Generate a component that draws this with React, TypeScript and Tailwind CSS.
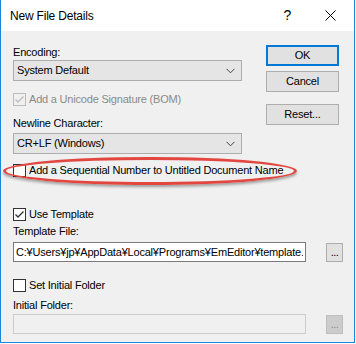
const font = { fontFamily: '"Liberation Sans", Arial, sans-serif' };

function Chevron() {
  return (
    <svg width="9" height="6" viewBox="0 0 9 6" className="shrink-0">
      <path d="M0.5 0.8 L4.5 4.8 L8.5 0.8" fill="none" stroke="#404040" strokeWidth="1" />
    </svg>
  );
}

function Select({ value }: { value: string }) {
  return (
    <div className="flex h-[21px] w-[229px] items-center justify-between border border-[#adadad] bg-[#e5e5e5] pl-[3px] pr-[6px]">
      <span className="leading-none">{value}</span>
      <Chevron />
    </div>
  );
}

function CheckBox({ checked, disabled }: { checked?: boolean; disabled?: boolean }) {
  return (
    <div
      className={`flex h-[13px] w-[13px] shrink-0 items-center justify-center border ${
        disabled ? "border-[#bcbcbc] bg-[#f0f0f0]" : "border-[#333333] bg-white"
      }`}
    >
      {checked && (
        <svg width="11" height="11" viewBox="0 0 11 11">
          <path
            d="M1.5 5.5 L4 8 L9.5 2.5"
            fill="none"
            stroke={disabled ? "#bcbcbc" : "#333333"}
            strokeWidth="1.3"
          />
        </svg>
      )}
    </div>
  );
}

function Check({
  label,
  checked,
  disabled,
  className,
}: {
  label: string;
  checked?: boolean;
  disabled?: boolean;
  className?: string;
}) {
  return (
    <div className={`flex h-[13px] items-center gap-[3px] ${className ?? ""}`}>
      <CheckBox checked={checked} disabled={disabled} />
      <span className={`whitespace-nowrap leading-none ${disabled ? "text-[#8a8a8a]" : "text-black"}`}>
        {label}
      </span>
    </div>
  );
}

function Button({ label, primary }: { label: string; primary?: boolean }) {
  return (
    <div
      className={`flex h-[21px] w-[73px] items-center justify-center bg-[#e1e1e1] ${
        primary ? "border-2 border-[#0078d7]" : "border border-[#adadad]"
      }`}
    >
      <span className="leading-none">{label}</span>
    </div>
  );
}

function DotsButton({ disabled }: { disabled?: boolean }) {
  return (
    <div
      className={`flex h-[19px] w-[17px] items-end justify-center border pb-[3px] ${
        disabled ? "border-[#bfbfbf] bg-[#cccccc] text-[#8a8a8a]" : "border-[#adadad] bg-[#e1e1e1] text-black"
      }`}
    >
      <span className="text-[11px] leading-none tracking-[-0.5px]">...</span>
    </div>
  );
}

export default function App() {
  return (
    <div className="h-[344px] w-[356px] bg-white text-[11px] tracking-[-0.2px] text-black" style={font}>
      <div className="relative flex h-[343px] w-[355px] flex-col border-x border-b border-[#1c87d9]">
        {/* title bar */}
        <div className="flex h-[31px] items-center bg-white pl-[9px]">
          <span className="text-[12px]">New File Details</span>
          <span className="ml-auto mr-[34px] text-[14px] font-light">?</span>
          <svg width="11" height="11" viewBox="0 0 11 11" className="mr-[18px]">
            <path d="M0.5 0.5 L10.5 10.5 M10.5 0.5 L0.5 10.5" stroke="#000" strokeWidth="1" />
          </svg>
        </div>

        <div className="flex-1 bg-[#f0f0f0] pl-[12px]">
          <div className="flex">
            <div className="flex w-[229px] flex-col">
              <div className="mt-[13px] h-[16px] leading-[16px]">Encoding:</div>
              <Select value="System Default" />
              <Check className="mt-[12px]" label="Add a Unicode Signature (BOM)" checked disabled />
              <div className="mt-[9px] h-[16px] leading-[16px]">Newline Character:</div>
              <div className="mt-[2px]">
                <Select value="CR+LF (Windows)" />
              </div>
            </div>
            <div className="ml-[24px] flex flex-col">
              <div className="mt-[14px]">
                <Button label="OK" primary />
              </div>
              <div className="mt-[5px]">
                <Button label="Cancel" />
              </div>
              <div className="mt-[12px]">
                <Button label="Reset..." />
              </div>
            </div>
          </div>

          <Check className="mt-[10px]" label="Add a Sequential Number to Untitled Document Name" />

          <Check className="mt-[31px]" label="Use Template" checked />
          <div className="mt-[2px] h-[16px] leading-[16px]">Template File:</div>
          <div className="mt-[3px] flex items-center">
            <div className="flex h-[20px] w-[293px] items-center border border-[#7a7a7a] bg-white pl-[2px]">
              <span className="block w-[287px] overflow-hidden whitespace-nowrap leading-none">
                C:¥Users¥jp¥AppData¥Local¥Programs¥EmEditor¥template.
              </span>
            </div>
            <div className="ml-[20px]">
              <DotsButton />
            </div>
          </div>

          <Check className="mt-[17px]" label="Set Initial Folder" />
          <div className="mt-[5px] h-[16px] leading-[16px]">Initial Folder:</div>
          <div className="mt-[1px] flex items-center">
            <div className="h-[20px] w-[293px] border border-[#cccccc] bg-[#f0f0f0]" />
            <div className="ml-[20px]">
              <DotsButton disabled />
            </div>
          </div>
        </div>

        {/* annotation ellipse */}
        <div className="pointer-events-none absolute left-[2px] top-[157px] h-[28px] w-[294px] rounded-[50%] border-[3px] border-[#e2463f] shadow-[0_2px_3px_rgba(0,0,0,0.35)]" />
      </div>
    </div>
  );
}
